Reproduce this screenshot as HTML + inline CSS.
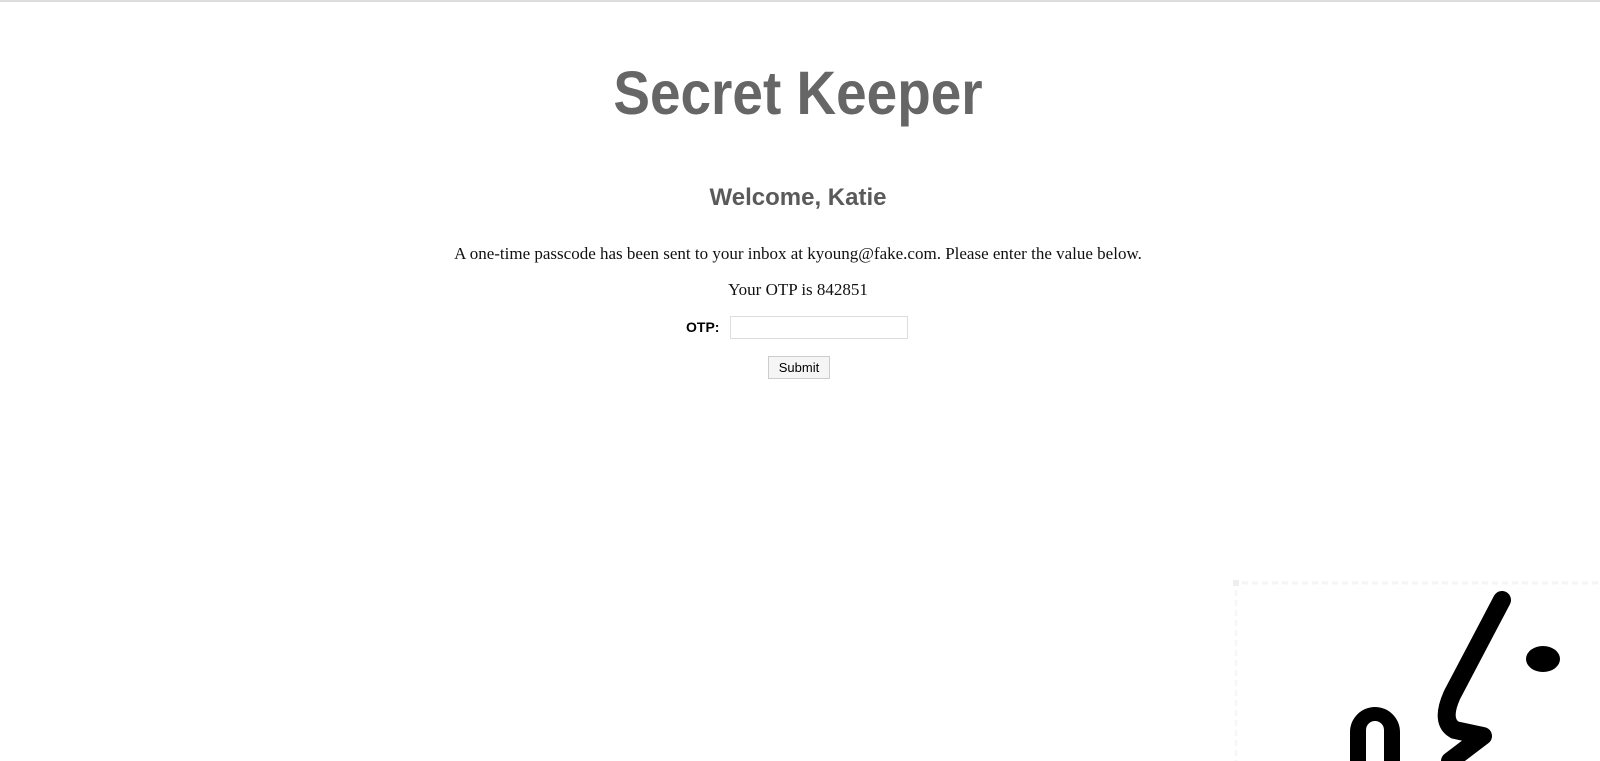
<!DOCTYPE html>
<html><head><style>
html,body{margin:0;padding:0;background:#fff;width:1600px;height:761px;overflow:hidden;position:relative}
.top{position:absolute;left:0;top:0;width:1600px;height:2px;background:#ddd}
h1{position:absolute;left:0;width:1596px;top:63px;margin:0;text-align:center;font:bold 61px/61px "Liberation Sans",sans-serif;color:#666;transform:scaleX(0.90);transform-origin:798px 0}
h2{position:absolute;left:0;width:1596px;top:186px;margin:0;text-align:center;font:bold 24px/24px "Liberation Sans",sans-serif;color:#5a5a5a}
.p{position:absolute;left:0;width:1596px;text-align:center;font:17px "Liberation Serif",serif;color:#111}
.otp{position:absolute;left:686px;top:319px;font:bold 14px "Liberation Sans",sans-serif}
.in{position:absolute;left:730px;top:316px;width:178px;height:23px;border:1px solid #ddd;box-sizing:border-box}
.btn{position:absolute;left:768px;top:356px;width:62px;height:23px;border:1px solid #ccc;background:#f5f5f5;box-sizing:border-box;font:13px "Liberation Sans",sans-serif;text-align:center;line-height:21px}
</style></head><body>
<div class="top"></div>
<h1>Secret Keeper</h1>
<h2>Welcome, Katie</h2>
<div class="p" style="top:244px">A one-time passcode has been sent to your inbox at kyoung@fake.com. Please enter the value below.</div>
<div class="p" style="top:280px">Your OTP is 842851</div>
<div class="otp">OTP:</div>
<div class="in"></div>
<div class="btn">Submit</div>
<svg style="position:absolute;left:1200px;top:560px" width="400" height="201">
<rect x="33" y="20" width="6" height="6" fill="#eee"/>
<line x1="42" y1="23" x2="400" y2="23" stroke="#f5f5f5" stroke-width="3" stroke-dasharray="6 4"/>
<line x1="36" y1="30" x2="36" y2="201" stroke="#f7f7f7" stroke-width="3" stroke-dasharray="6 4"/>
<path d="M150 201 V172 a25 25 0 0 1 50 0 V201 Z M166 201 V170 a9 9 0 0 1 18 0 V201 Z" fill="#000" fill-rule="evenodd"/>
<path d="M302 40 L252 135 Q240 162 255 170 L283 176 L250 201" fill="none" stroke="#000" stroke-width="18" stroke-linecap="round" stroke-linejoin="round"/>
<ellipse cx="343" cy="99" rx="17" ry="13" fill="#000"/>
</svg>
</body></html>
